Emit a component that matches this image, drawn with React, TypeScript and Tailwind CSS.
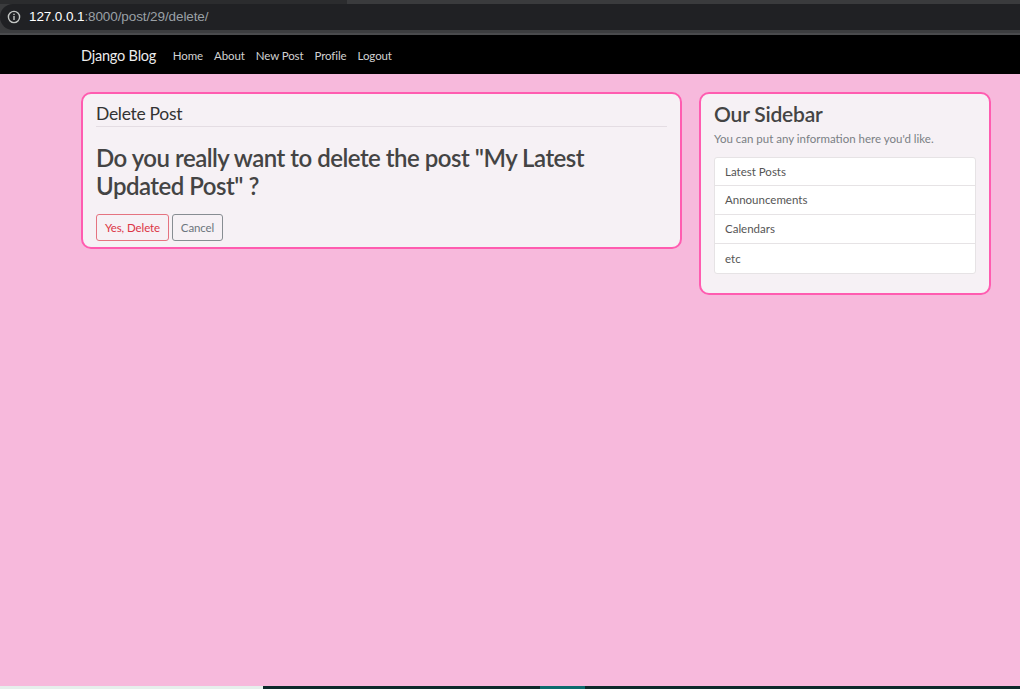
import React from "react";

const font = { fontFamily: "Lato, 'Open Sans', 'Noto Sans', sans-serif" };

export default function App() {
  const links = ["Home", "About", "New Post", "Profile", "Logout"];
  const items = ["Latest Posts", "Announcements", "Calendars", "etc"];
  return (
    <div className="w-[1020px] h-[689px] flex flex-col bg-[#f7b9dc] overflow-hidden font-['Lato','Open_Sans',sans-serif]">
      {/* browser chrome */}
      <div className="h-[35px] flex flex-col bg-[#3a3b3d] shrink-0">
        <div className="h-[4px] flex">
          <div className="w-[347px] bg-[#2b2c2e]" />
          <div className="flex-1 bg-[#3a3b3d]" />
        </div>
        <div className="h-[26px] bg-[#202124] rounded-l-[13px] flex items-center pl-[7px] gap-[8px]">
          <svg width="14" height="14" viewBox="0 0 14 14" className="shrink-0">
            <circle cx="7" cy="7" r="5.6" fill="none" stroke="#c4c7c5" strokeWidth="1.4" />
            <rect x="6.3" y="6" width="1.4" height="4" fill="#c4c7c5" />
            <rect x="6.3" y="3.7" width="1.4" height="1.4" fill="#c4c7c5" />
          </svg>
          <span className="text-[13.5px] leading-none tracking-[-0.1px] font-['Liberation_Sans','Noto_Sans',sans-serif]">
            <span className="text-[#ffffff]">127.0.0.1</span>
            <span className="text-[#9aa0a6]">:8000/post/29/delete/</span>
          </span>
        </div>
        <div className="h-[3px] bg-[#3c3d3f]" />
        <div className="h-[2px] bg-[#4a4b4d]" />
      </div>

      {/* navbar */}
      <nav className="h-[39px] bg-black flex items-center pl-[81px] pt-[2px] shrink-0" style={font}>
        <span className="text-[14.5px] tracking-[-0.2px] text-[#ececec] mr-[11px]">Django Blog</span>
        <div className="flex items-center">
          {links.map((l) => (
            <span key={l} className="text-[11.5px] tracking-[-0.1px] text-[#d2d2d2] px-[5.5px]">
              {l}
            </span>
          ))}
        </div>
      </nav>

      {/* content */}
      <main className="flex-1 flex items-start gap-[17px] pl-[81px] pt-[18px]" style={font}>
        <section className="w-[601px] border-2 border-[#ff5cb0] rounded-[10px] bg-[#f6f1f5] px-[13px] pt-[7px] pb-[6px]">
          <div className="text-[17.5px] leading-[25px] tracking-[-0.3px] text-[#333] border-b border-[#e4dde3]">
            Delete Post
          </div>
          <h2 className="mt-[17px] max-w-[545px] text-[24px] leading-[28px] tracking-[-0.5px] font-semibold text-[#444]">
            Do you really want to delete the post "My Latest Updated Post" ?
          </h2>
          <div className="mt-[14px] flex gap-[3px]">
            <button className="h-[27px] w-[73px] border border-[#e57380] rounded-[3px] text-[11.5px] tracking-[-0.1px] text-[#dc3545]">
              Yes, Delete
            </button>
            <button className="h-[27px] w-[51px] border border-[#878d92] rounded-[3px] text-[11.5px] tracking-[-0.1px] text-[#6c757d]">
              Cancel
            </button>
          </div>
        </section>

        <aside className="w-[292px] border-2 border-[#ff5cb0] rounded-[10px] bg-[#f6f1f5] px-[13px] pt-[7px] pb-[19px]">
          <h3 className="text-[21px] leading-[25px] tracking-[-0.2px] font-semibold text-[#444]">Our Sidebar</h3>
          <p className="mt-[4px] text-[11.5px] leading-[17px] text-[#7a7f84]">
            You can put any information here you'd like.
          </p>
          <ul className="mt-[10px] bg-white border border-[#e6e3e5] rounded-[3px] divide-y divide-[#e6e3e5]">
            {items.map((it, i) => (
              <li
                key={it}
                className={
                  (i === 0 ? "h-[28px] " : "h-[29px] ") +
                  "flex items-center pl-[10px] text-[11.5px] text-[#555]"
                }
              >
                {it}
              </li>
            ))}
          </ul>
        </aside>
      </main>

      {/* taskbar sliver */}
      <div className="h-[3px] flex shrink-0">
        <div className="w-[263px] bg-[#e6efec]" />
        <div className="w-[277px] bg-[#0d2a2b]" />
        <div className="w-[45px] bg-[#0b6a6c]" />
        <div className="flex-1 bg-[#0d2a2b]" />
      </div>
    </div>
  );
}
